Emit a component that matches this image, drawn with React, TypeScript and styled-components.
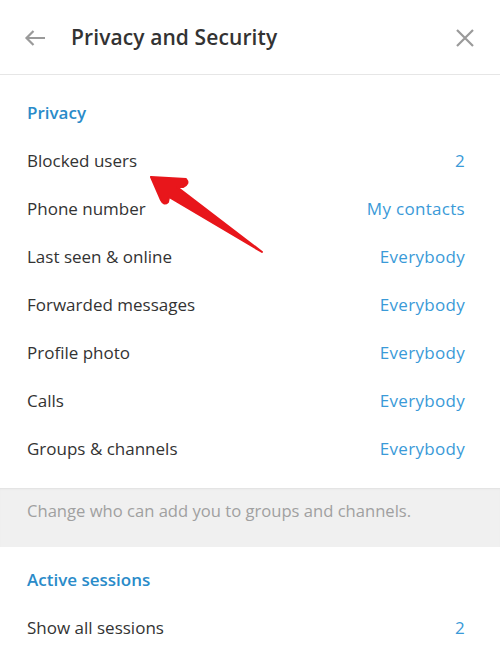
import styled, { createGlobalStyle } from 'styled-components';

const GlobalStyle = createGlobalStyle`
  html, body {
    margin: 0;
    padding: 0;
    background: #fff;
  }
  body {
    font-family: 'Open Sans', 'Liberation Sans', sans-serif;
    -webkit-font-smoothing: antialiased;
  }
`;

const Panel = styled.div`
  position: relative;
  width: 500px;
  height: 659px;
  overflow: hidden;
  background: #fff;
`;

const Header = styled.div`
  display: flex;
  align-items: center;
  height: 75px;
  padding: 0 24px;
  border-bottom: 1px solid #e6e6e6;
  box-sizing: border-box;
`;

const IconButton = styled.div`
  display: flex;
  align-items: center;
  justify-content: center;
  width: 22px;
  height: 22px;
  margin-top: 2px;
`;

const Title = styled.h1`
  flex: 1;
  margin: 0 0 0 25px;
  font-size: 21px;
  font-weight: 600;
  color: #333;
  letter-spacing: 0.1px;
`;

const Section = styled.div<{ $top: number; $bottom: number }>`
  display: flex;
  flex-direction: column;
  padding: ${(p) => p.$top}px 0 ${(p) => p.$bottom}px;
`;

const SectionTitle = styled.div`
  display: flex;
  align-items: center;
  height: 48px;
  padding: 0 27px;
  font-size: 17px;
  font-weight: 600;
  color: #2a8bc9;
`;

const Row = styled.div`
  display: flex;
  align-items: center;
  justify-content: space-between;
  height: 48px;
  padding: 0 35px 0 27px;
  font-size: 17px;
  color: #333;
`;

const Value = styled.span`
  color: #3a9ad8;
  letter-spacing: 0.3px;
`;

const Note = styled.div`
  padding: 12px 27px 25px;
  line-height: 22px;
  font-size: 16.6px;
  color: #a0a0a0;
  background: #f0f0f0;
  box-shadow: inset 0 2px 2px -1px #e0e0e0;
`;

const Pointer = styled.svg`
  position: absolute;
  left: 0;
  top: 0;
  pointer-events: none;
`;

const privacyRows: [string, string][] = [
  ['Blocked users', '2'],
  ['Phone number', 'My contacts'],
  ['Last seen & online', 'Everybody'],
  ['Forwarded messages', 'Everybody'],
  ['Profile photo', 'Everybody'],
  ['Calls', 'Everybody'],
  ['Groups & channels', 'Everybody'],
];

const App = () => {
  return (
    <>
      <GlobalStyle />
      <Panel>
        <Header>
          <IconButton>
            <svg width="22" height="18" viewBox="0 0 22 18">
              <path d="M21 9H2.5M9.5 2L2.5 9l7 7" fill="none" stroke="#9a9a9a" strokeWidth="2.2" />
            </svg>
          </IconButton>
          <Title>Privacy and Security</Title>
          <IconButton>
            <svg width="20" height="20" viewBox="0 0 20 20">
              <path d="M2 2l16 16M18 2L2 18" fill="none" stroke="#9a9a9a" strokeWidth="2.2" />
            </svg>
          </IconButton>
        </Header>

        <Section $top={13} $bottom={16}>
          <SectionTitle>Privacy</SectionTitle>
          {privacyRows.map(([label, value]) => (
            <Row key={label}>
              <span>{label}</span>
              <Value>{value}</Value>
            </Row>
          ))}
        </Section>

        <Note>Change who can add you to groups and channels.</Note>

        <Section $top={8} $bottom={0}>
          <SectionTitle>Active sessions</SectionTitle>
          <Row>
            <span>Show all sessions</span>
            <Value>2</Value>
          </Row>
        </Section>

        <Pointer width="500" height="659" viewBox="0 0 500 659">
          <path
            d="M151 177 L186 179 Q190 184 183 187 L177 187 L262 252 L169 197 L168 202 Q164 206 161 200 Z"
            fill="#e8161b"
            stroke="#e8161b"
            strokeWidth="2"
            strokeLinejoin="round"
          />
        </Pointer>
      </Panel>
    </>
  );
};

export default App;
